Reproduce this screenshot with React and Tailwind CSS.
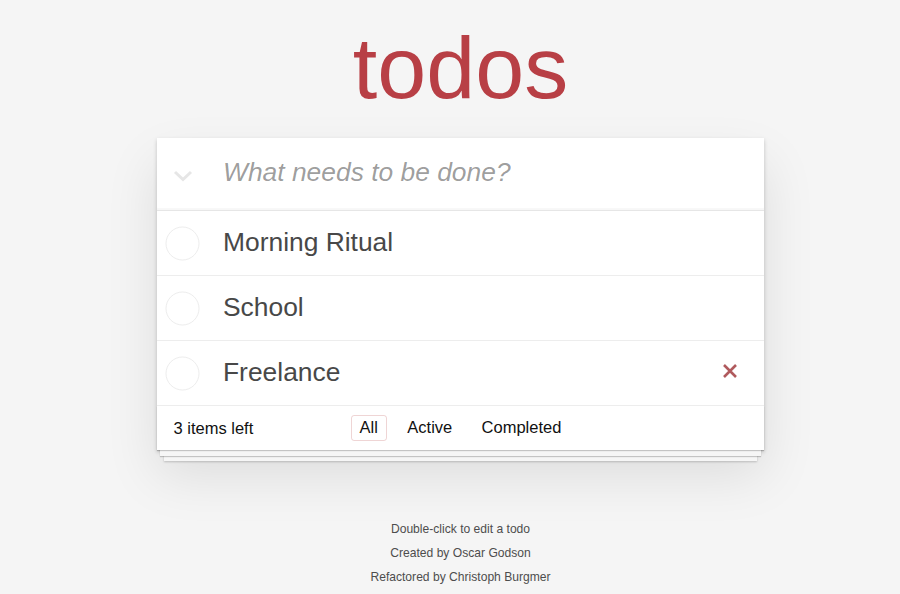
import React from "react"

const todos = [
  { id: 1, title: "Morning Ritual" },
  { id: 2, title: "School" },
  { id: 3, title: "Freelance", hover: true },
]

const font = "font-['Liberation_Sans',Arial,Helvetica,sans-serif]"

const App = () => {
  return (
    <div className={`min-h-screen bg-[#f5f5f5] ${font} pl-[21px] pt-[24px]`}>
      <div className="w-[607px] mx-auto">
        {/* Title */}
        <h1 className="text-center text-[88px] leading-none font-normal text-[#b83f45] h-[114px]">todos</h1>

        {/* App card */}
        <section className="relative bg-white shadow-[0_2px_4px_0_rgba(0,0,0,0.2),0_25px_50px_0_rgba(0,0,0,0.1)]">
          <header className="flex items-center h-[72px] shadow-[inset_0_-2px_1px_rgba(0,0,0,0.03)]">
            <div className="w-[66px] flex justify-start pl-[16px] pt-[4px]">
              <svg width="20" height="14" viewBox="0 0 20 14" fill="none">
                <path d="M2 3 L10 10.5 L18 3" stroke="#e6e6e6" strokeWidth="3" strokeLinejoin="miter" />
              </svg>
            </div>
            <input
              className="flex-1 h-full pb-[3px] outline-none bg-transparent text-[26.4px] text-[#484848] placeholder:italic placeholder:text-[rgba(0,0,0,0.4)] pr-[16px]"
              placeholder="What needs to be done?"
            />
          </header>

          <ul className="border-t border-[#e6e6e6]">
            {todos.map((t) => (
              <li key={t.id} className="flex items-center h-[65px] border-b border-[#ededed]">
                <div className="w-[66px] flex justify-start pl-[8px]">
                  <svg width="35" height="35" viewBox="0 0 35 35">
                    <circle cx="17.5" cy="17.5" r="16.5" fill="none" stroke="#ededed" strokeWidth="1" />
                  </svg>
                </div>
                <span className="flex-1 text-[26.4px] leading-[1.2] text-[#484848]">{t.title}</span>
                {t.hover && (
                  <div className="w-[42px] flex justify-start pb-[4px]">
                    <svg width="16" height="16" viewBox="0 0 16 16">
                      <path d="M2 2 L14 14 M14 2 L2 14" stroke="#b05a5d" strokeWidth="2.6" />
                    </svg>
                  </div>
                )}
              </li>
            ))}
          </ul>

          {/* Footer */}
          <footer className="relative flex items-center h-[44px] px-[16.5px] text-[16.5px] text-[#111] shadow-[0_1px_1px_rgba(0,0,0,0.2),0_9px_0_-3px_#f6f6f6,0_10px_1px_-3px_rgba(0,0,0,0.2),0_18px_0_-7px_#f6f6f6,0_19px_2px_-7px_rgba(0,0,0,0.2)]">
            <span className="w-[160px]">3 items left</span>
            <div className="absolute inset-x-0 top-0 h-full flex items-center justify-center gap-[12px]">
              <a className="px-[7.7px] py-[2px] border border-[rgba(175,47,47,0.2)] rounded-[3px] leading-[1.2]">All</a>
              <a className="px-[7.7px] py-[2px] border border-transparent rounded-[3px] leading-[1.2]">Active</a>
              <a className="px-[7.7px] py-[2px] border border-transparent rounded-[3px] leading-[1.2]">Completed</a>
            </div>
          </footer>
        </section>

        {/* Info */}
        <div className="mt-[73px] text-center text-[12.1px] leading-none text-[#4d4d4d] flex flex-col gap-[12px]">
          <p>Double-click to edit a todo</p>
          <p>Created by Oscar Godson</p>
          <p>Refactored by Christoph Burgmer</p>
        </div>
      </div>
    </div>
  )
}

export default App
